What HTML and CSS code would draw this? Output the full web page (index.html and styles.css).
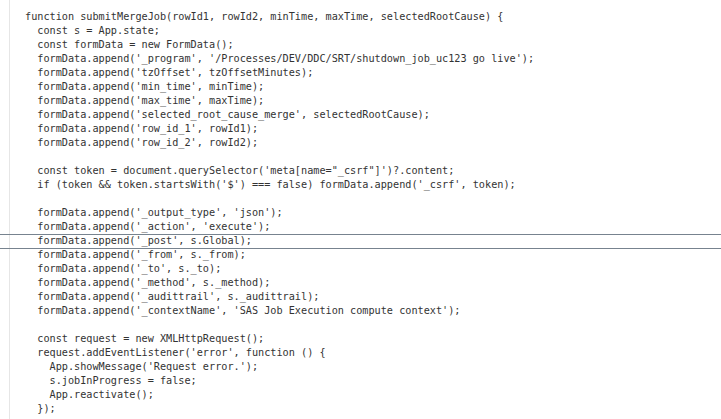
FILE: index.html
```html
<!DOCTYPE html>
<html>
<head>
<meta charset="utf-8">
<link rel="stylesheet" href="styles.css">
</head>
<body>
<div class="editor">
<div class="ln">function submitMergeJob(rowId1, rowId2, minTime, maxTime, selectedRootCause) {</div>
<div class="ln">  const s = App.state;</div>
<div class="ln">  const formData = new FormData();</div>
<div class="ln">  formData.append('_program', '/Processes/DEV/DDC/SRT/shutdown_job_uc123 go live');</div>
<div class="ln">  formData.append('tzOffset', tzOffsetMinutes);</div>
<div class="ln">  formData.append('min_time', minTime);</div>
<div class="ln">  formData.append('max_time', maxTime);</div>
<div class="ln">  formData.append('selected_root_cause_merge', selectedRootCause);</div>
<div class="ln">  formData.append('row_id_1', rowId1);</div>
<div class="ln">  formData.append('row_id_2', rowId2);</div>
<div class="ln"> </div>
<div class="ln">  const token = document.querySelector('meta[name="_csrf"]')?.content;</div>
<div class="ln">  if (token &amp;&amp; token.startsWith('$') === false) formData.append('_csrf', token);</div>
<div class="ln"> </div>
<div class="ln">  formData.append('_output_type', 'json');</div>
<div class="ln">  formData.append('_action', 'execute');</div>
<div class="ln current">  formData.append('_post', s.Global);</div>
<div class="ln">  formData.append('_from', s._from);</div>
<div class="ln">  formData.append('_to', s._to);</div>
<div class="ln">  formData.append('_method', s._method);</div>
<div class="ln">  formData.append('_audittrail', s._audittrail);</div>
<div class="ln">  formData.append('_contextName', 'SAS Job Execution compute context');</div>
<div class="ln"> </div>
<div class="ln">  const request = new XMLHttpRequest();</div>
<div class="ln">  request.addEventListener('error', function () {</div>
<div class="ln">    App.showMessage('Request error.');</div>
<div class="ln">    s.jobInProgress = false;</div>
<div class="ln">    App.reactivate();</div>
<div class="ln">  });</div>
</div>
</body>
</html>
```
FILE: styles.css
```css
html, body {
  margin: 0;
  padding: 0;
  background: #ffffff;
  overflow: hidden;
}
.editor {
  margin-left: 9px;
  border-left: 1px solid #e6e6e6;
  padding: 10px 0 0 15px;
  height: 419px;
  box-sizing: border-box;
  font-family: "DejaVu Sans Mono", "Liberation Mono", monospace;
  font-size: 10.2px;
  color: #333333;
}
.ln {
  white-space: pre;
  height: 14px;
  line-height: 14px;
}
.current {
  margin-left: -25px;
  padding-left: 25px;
  box-shadow: inset 0 1px 0 #77838f, 0 1px 0 #77838f;
}
```
